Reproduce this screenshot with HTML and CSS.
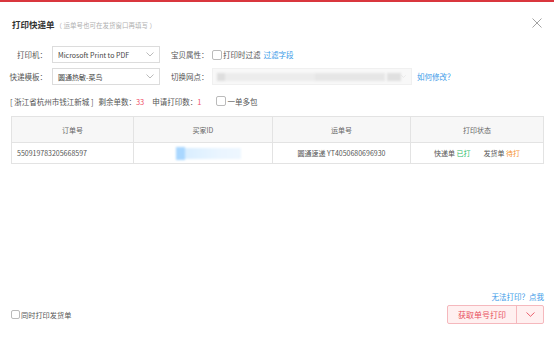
FILE: index.html
```html
<!DOCTYPE html>
<html lang="zh-CN">
<head>
<meta charset="utf-8">
<title>打印快递单</title>
<link rel="stylesheet" href="styles.css">
</head>
<body>
<div class="dialog">
  <div class="topbar"></div>
  <div class="header">
    <div class="title">打印快递单<span class="sub">（ 运单号也可在发货窗口再填写 ）</span></div>
    <svg class="close" width="10" height="10" viewBox="0 0 10 10"><path d="M0.5 0.5 L9.5 9.5 M9.5 0.5 L0.5 9.5" stroke="#999" stroke-width="0.9" fill="none"/></svg>
  </div>

  <div class="form">
    <div class="row">
      <span class="label">打印机：</span>
      <div class="select"><span>Microsoft Print to PDF</span><svg class="chev" width="8" height="5" viewBox="0 0 8 5"><path d="M0.5 0.5 L4 4 L7.5 0.5" stroke="#aaa" stroke-width="0.8" fill="none"/></svg></div>
      <span class="label2">宝贝属性：</span>
      <span class="check"></span>
      <span class="text">打印时过滤</span>
      <a class="link">过滤字段</a>
    </div>
    <div class="row r2">
      <span class="label">快递模板：</span>
      <div class="select"><span>圆通热敏-菜鸟</span><svg class="chev" width="8" height="5" viewBox="0 0 8 5"><path d="M0.5 0.5 L4 4 L7.5 0.5" stroke="#aaa" stroke-width="0.8" fill="none"/></svg></div>
      <span class="label2">切换网点：</span>
      <div class="select wide">
        <div class="blur">
          <i class="b1"></i><i class="b2"></i><i class="b3"></i><i class="b4"></i>
        </div>
        <svg class="chev" width="8" height="5" viewBox="0 0 8 5"><path d="M0.5 0.5 L4 4 L7.5 0.5" stroke="#ddd" stroke-width="0.8" fill="none"/></svg>
      </div>
      <a class="link how">如何修改？</a>
    </div>
    <div class="row r3">
      <span class="text">[ 浙江省杭州市钱江新城 ]</span>
      <span class="text stat">剩余单数：<em>33</em></span>
      <span class="text stat">申请打印数：<em>1</em></span>
      <span class="check multi"></span>
      <span class="text">一单多包</span>
    </div>
  </div>

  <table class="grid">
    <colgroup><col class="c1"><col class="c2"><col class="c3"><col class="c4"></colgroup>
    <thead>
      <tr><th>订单号</th><th>买家ID</th><th>运单号</th><th>打印状态</th></tr>
    </thead>
    <tbody>
      <tr>
        <td class="left">550919783205668597</td>
        <td><div class="buyer"><i class="p1"></i><i class="p2"></i></div></td>
        <td>圆通速递 YT4050680696930</td>
        <td>快递单 <span class="ok">已打</span><span class="gap"></span>发货单 <span class="wait">待打</span></td>
      </tr>
    </tbody>
  </table>

  <div class="footer">
    <div class="helprow"><a class="link">无法打印？点我</a></div>
    <div class="actions">
      <label class="opt"><span class="check"></span><span class="text">同时打印发货单</span></label>
      <div class="btn">
        <span class="main">获取单号打印</span>
        <span class="drop"><svg width="9" height="5" viewBox="0 0 9 5"><path d="M0.5 0.5 L4.5 4.3 L8.5 0.5" stroke="#e8505f" stroke-width="0.9" fill="none"/></svg></span>
      </div>
    </div>
  </div>
</div>
</body>
</html>
```

FILE: styles.css
```css
* { box-sizing: border-box; }
html, body { margin: 0; padding: 0; }
body {
  width: 554px;
  height: 337px;
  background: #fff;
  font-family: "Noto Sans CJK SC", "Noto Sans", sans-serif;
  color: #555;
  font-size: 7.5px;
  overflow: hidden;
}
.dialog {
  height: 337px;
  display: flex;
  flex-direction: column;
}
.topbar { height: 2px; background: #d9363e; flex: none; }
.header {
  display: flex;
  align-items: center;
  justify-content: space-between;
  height: 16px;
  margin-top: 14px;
  padding: 0 12px 0 12px;
}
.title { font-size: 8.5px; font-weight: bold; color: #333; }
.title .sub { font-size: 6.5px; font-weight: normal; color: #b0b0b0; margin-left: 1px; }
.close { margin-top: -2px; }

.form { margin-top: 14px; }
.row { display: flex; align-items: center; height: 17px; padding-left: 9px; white-space: nowrap; }
.row > * { flex: none; }
.row.r2 { margin-top: 5px; }
.row.r3 { margin-top: 10px; height: 12px; padding-left: 10px; }
.label { width: 38px; text-align: right; margin-right: 5px; }
.label2 { width: 38px; margin-left: 11px; margin-right: 3px; }
.select {
  width: 108px;
  height: 17px;
  border: 1px solid #dcdcdc;
  display: flex;
  align-items: center;
  justify-content: space-between;
  padding: 0 5px 0 5px;
  color: #444;
  font-size: 7px;
}
.select.wide {
  width: 200px;
  background: #f8f8f8;
  border-color: #f0f0f0;
  padding-left: 4px;
}
.blur { display: flex; align-items: center; gap: 0; filter: blur(1.3px); height: 9px; }
.blur i { display: block; height: 8px; }
.blur .b1 { width: 8px; background: #dedede; }
.blur .b2 { width: 90px; background: #ececec; }
.blur .b3 { width: 70px; background: #e6e6e6; }
.blur .b4 { width: 14px; background: #e0e0e0; margin-left: 2px; }
.check {
  display: inline-block;
  width: 10px;
  height: 10px;
  border: 1px solid #bbb;
  border-radius: 2px;
  background: #fff;
  margin-right: 1px;
  flex: none;
}
.text { color: #555; }
.link { color: #3a9ae8; margin-left: 3px; }
.link.how { margin-left: 5px; }
.stat { margin-left: 5px; }
.stat em { font-style: normal; color: #f0506a; }
.stat + .stat { margin-left: 8px; }
.check.multi { margin-left: 15px; }

.grid {
  margin: 9px 0 0 11px;
  width: 532px;
  border-collapse: collapse;
  table-layout: fixed;
  font-size: 7px;
  color: #555;
}
.grid col.c1 { width: 122px; }
.grid col.c2 { width: 139px; }
.grid col.c3 { width: 138px; }
.grid col.c4 { width: 133px; }
.grid th, .grid td { border: 1px solid #e3e3e3; text-align: center; padding: 0; }
.grid th { height: 26px; background: #f7f7f7; font-weight: normal; color: #666; }
.grid td { height: 21px; }
.grid td.left { text-align: left; padding-left: 5px; }
.buyer { display: flex; justify-content: center; align-items: center; margin-left: 10px; filter: blur(0.8px); }
.buyer i { display: block; height: 11px; }
.buyer .p1 { width: 9px; height: 13px; background: #a9d7ff; }
.buyer .p2 { width: 56px; background: linear-gradient(90deg, #d9eeff, #eaf5ff 60%, #eef7ff); }
.ok { color: #2dbb6a; }
.wait { color: #f5922f; }
.gap { display: inline-block; width: 13px; }

.footer { margin-top: auto; padding: 0 10px 13px 11px; }
.helprow { display: flex; justify-content: flex-end; height: 10px; align-items: center; margin-bottom: 4px; }
.actions { display: flex; justify-content: space-between; align-items: center; }
.opt { display: flex; align-items: center; font-size: 7.2px; }
.opt .check { width: 9px; height: 9px; margin-right: 1px; }
.btn {
  display: flex;
  height: 19px;
  width: 97px;
  border: 1px solid #f5b8bd;
  border-radius: 2px;
  background: #fff0f0;
  color: #e8505f;
  font-size: 8px;
}
.btn .main { width: 69px; display: flex; align-items: center; justify-content: center; border-right: 1px solid #f5b8bd; }
.btn .drop { flex: 1; display: flex; align-items: center; justify-content: center; }
```
